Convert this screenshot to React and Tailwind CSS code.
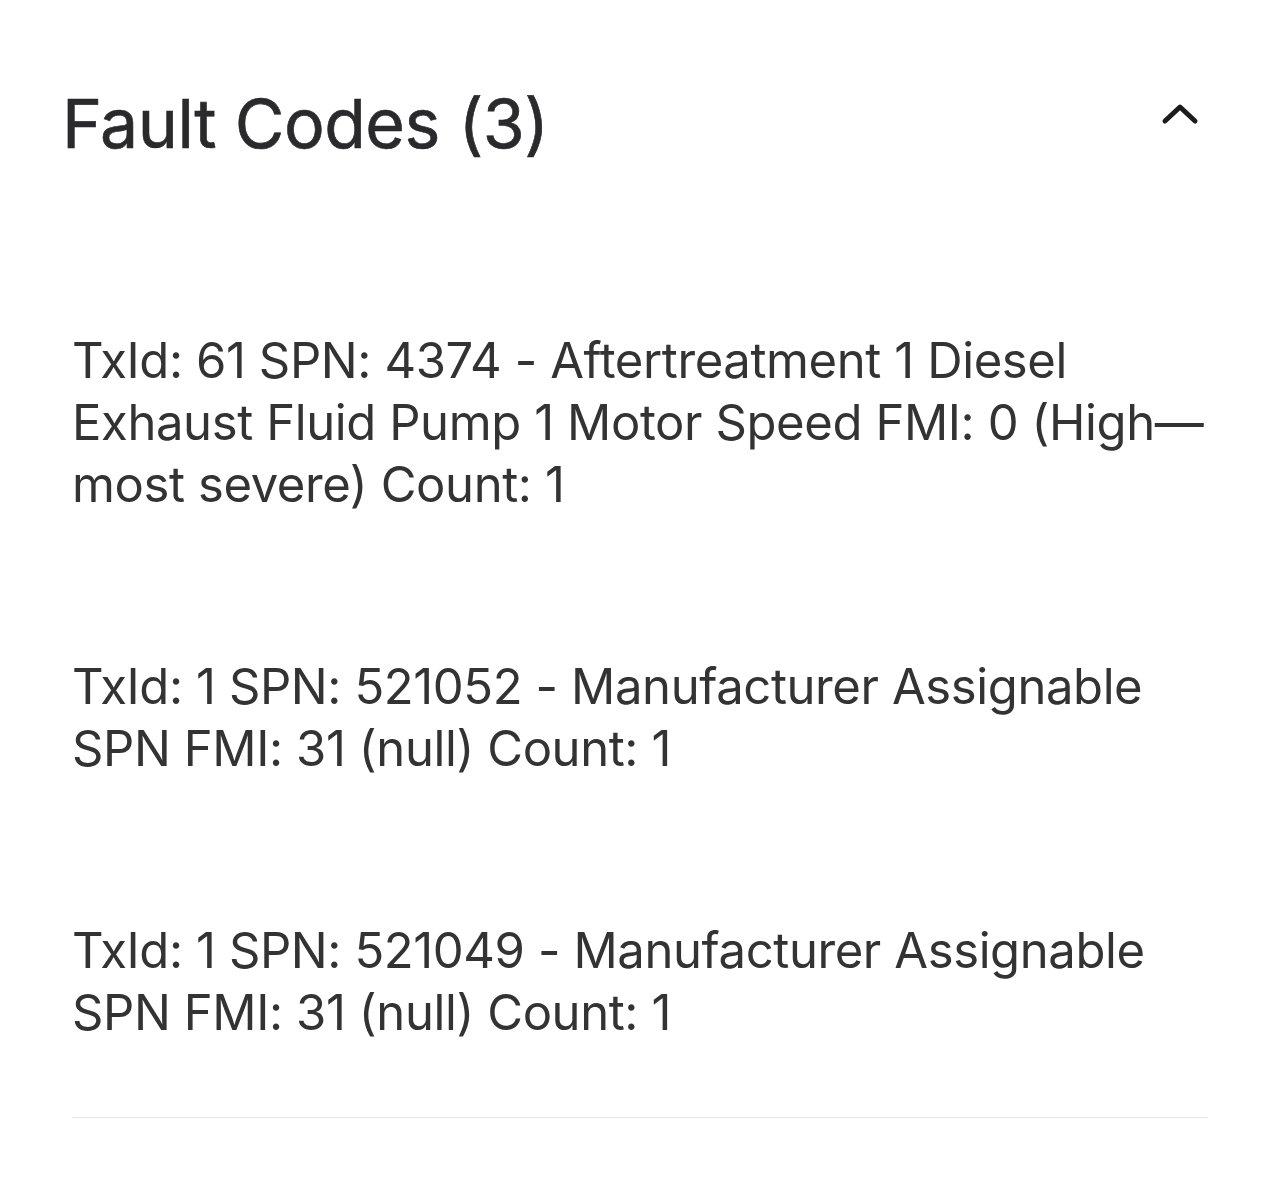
import React from 'react';

const faults = [
  [
    'TxId: 61 SPN: 4374 - Aftertreatment 1 Diesel',
    'Exhaust Fluid Pump 1 Motor Speed FMI: 0 (High—',
    'most severe) Count: 1',
  ],
  ['TxId: 1 SPN: 521052 - Manufacturer Assignable', 'SPN FMI: 31 (null) Count: 1'],
  ['TxId: 1 SPN: 521049 - Manufacturer Assignable', 'SPN FMI: 31 (null) Count: 1'],
];

const App = () => {
  return (
    <div className="min-h-screen bg-white font-['Inter','Liberation_Sans',sans-serif] text-[#333333]">
      {/* Header */}
      <div className="flex items-center justify-between pl-[62px] pr-[80px] pt-[80px] pb-[94px]">
        <h1 className="text-[68px] leading-[86px] text-[#2a2a2c] tracking-[-0.5px] [-webkit-text-stroke:0.6px_#2a2a2c]">
          Fault Codes (3)
        </h1>
        <svg width="40" height="24" viewBox="0 0 40 24" fill="none" className="mt-[-18px]">
          <path d="M5 19 L20 5 L35 19" stroke="#1c1c1e" strokeWidth="5" strokeLinecap="round" strokeLinejoin="round" />
        </svg>
      </div>

      {/* List */}
      <div className="mx-[72px] border-b border-[#e6e6e6]">
        {faults.map((lines, i) => (
          <div key={i} className="py-[70px] last:pb-[73px] text-[49px] leading-[62px] tracking-[-0.4px]">
            {lines.map((l, j) => (
              <div key={j} className="whitespace-nowrap">{l}</div>
            ))}
          </div>
        ))}
      </div>
    </div>
  );
};

export default App;
